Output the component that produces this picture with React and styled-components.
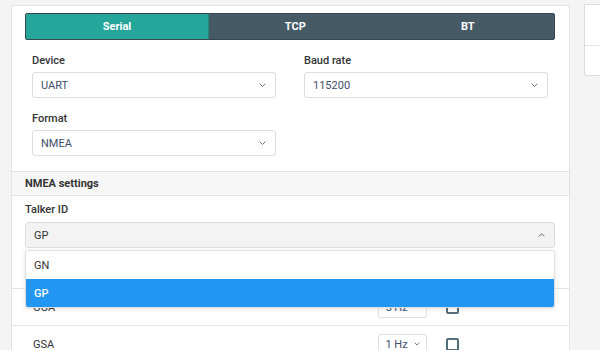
import React from "react";
import styled, { createGlobalStyle } from "styled-components";

const GlobalStyle = createGlobalStyle`
  html, body {
    margin: 0;
    padding: 0;
    background: #f4f4f4;
    font-family: Roboto, "Noto Sans", "Liberation Sans", sans-serif;
    font-size: 11px;
    color: #333;
    overflow: hidden;
  }
`;

const Page = styled.div`
  display: flex;
  align-items: flex-start;
  padding: 5px 0 0 11px;
  height: 345px;
  overflow: hidden;
`;

const Panel = styled.div`
  position: relative;
  width: 557px;
  min-height: 360px;
  background: #fff;
  border: 1px solid #e4e4e4;
  border-bottom: none;
`;

const SideCard = styled.div`
  margin-left: 14px;
  margin-top: -1px;
  flex: 1;
  background: #fff;
  border: 1px solid #dcdcdc;
  border-right: none;
  border-bottom-left-radius: 3px;
  height: 70px;
  display: flex;
  flex-direction: column;
`;

const SideCell = styled.div`
  height: ${(p) => p.h}px;
  border-bottom: ${(p) => (p.divider ? "1px solid #e4e4e4" : "none")};
`;

const Tabs = styled.div`
  display: flex;
  margin: 7px 14px 0 13px;
  height: 25px;
  border: 1px solid #37474f;
  border-radius: 2px;
  overflow: hidden;
  background: #455a64;
`;

const Tab = styled.div`
  flex: ${(p) => (p.active ? "0 0 182px" : "1")};
  display: flex;
  align-items: center;
  justify-content: center;
  color: #fff;
  font-weight: 700;
  font-size: 11px;
  background: ${(p) => (p.active ? "#26a69a" : "#455a64")};
  border-right: ${(p) => (p.active ? "1px solid #1f8c82" : "none")};
`;

const FieldGrid = styled.div`
  display: grid;
  grid-template-columns: 244px 244px;
  column-gap: 28px;
  row-gap: 14px;
  padding: 14px 7px 15px 20px;
`;

const Field = styled.div`
  display: flex;
  flex-direction: column;
`;

const Label = styled.div`
  font-weight: 500;
  color: #333;
  line-height: 14px;
  margin-bottom: ${(p) => (p.gap ? p.gap : 4)}px;
`;

const SelectBox = styled.div`
  height: 26px;
  box-sizing: border-box;
  border: 1px solid #dedede;
  border-radius: 3px;
  background: ${(p) => (p.open ? "#f3f3f3" : "#fff")};
  display: flex;
  align-items: center;
  justify-content: space-between;
  padding: 0 9px 0 8px;
  color: ${(p) => (p.open ? "#333" : "#3f4d6a")};
`;

const SectionHeader = styled.div`
  height: 23px;
  display: flex;
  align-items: center;
  padding-left: 13px;
  background: #f7f7f7;
  border-top: 1px solid #e2e2e2;
  border-bottom: 1px solid #e2e2e2;
  font-weight: 700;
  color: #333;
`;

const TalkerArea = styled.div`
  position: relative;
  padding: 7px 14px 40px 13px;
`;

const Menu = styled.div`
  position: absolute;
  left: 13px;
  right: 14px;
  top: 54px;
  z-index: 5;
  background: #fff;
  border: 1px solid #e0e0e0;
  border-radius: 3px;
  box-shadow: 0 1px 4px rgba(0, 0, 0, 0.12);
  overflow: hidden;
`;

const MenuItem = styled.div`
  height: 28px;
  display: flex;
  align-items: center;
  padding-left: 8px;
  background: ${(p) => (p.selected ? "#2196f3" : "#fff")};
  color: ${(p) => (p.selected ? "#fff" : "#333")};
  font-weight: ${(p) => (p.selected ? 500 : 400)};
`;

const Row = styled.div`
  height: 36px;
  display: flex;
  align-items: center;
  padding-left: 21px;
  border-top: 1px solid #e4e4e4;
`;

const RowName = styled.div`
  flex: 1;
  color: #333;
`;

const SmallSelect = styled.div`
  width: 49px;
  height: 21px;
  box-sizing: border-box;
  border: 1px solid #dedede;
  border-radius: 3px;
  display: flex;
  align-items: center;
  justify-content: center;
  gap: 6px;
  color: #3f4d6a;
`;

const Check = styled.div`
  width: 13px;
  height: 13px;
  box-sizing: border-box;
  border: 2px solid #546e7a;
  border-radius: 2px;
  margin: 0 110px 0 19px;
`;

const Chevron = ({ up, size = 7 }) => (
  <svg width={size} height={size * 0.6} viewBox="0 0 10 6">
    <polyline
      points={up ? "1,5 5,1 9,5" : "1,1 5,5 9,1"}
      fill="none"
      stroke="#666"
      strokeWidth="1.4"
    />
  </svg>
);

function Select({ value }) {
  return (
    <SelectBox>
      <span>{value}</span>
      <Chevron />
    </SelectBox>
  );
}

const rows = [
  { name: "GGA", rate: "5 Hz" },
  { name: "GSA", rate: "1 Hz" },
];

export default function App() {
  return (
    <>
      <GlobalStyle />
      <Page>
        <Panel>
          <Tabs>
            <Tab active>Serial</Tab>
            <Tab>TCP</Tab>
            <Tab>BT</Tab>
          </Tabs>
          <FieldGrid>
            <Field>
              <Label>Device</Label>
              <Select value="UART" />
            </Field>
            <Field>
              <Label>Baud rate</Label>
              <Select value="115200" />
            </Field>
            <Field>
              <Label>Format</Label>
              <Select value="NMEA" />
            </Field>
          </FieldGrid>
          <SectionHeader>NMEA settings</SectionHeader>
          <TalkerArea>
            <Label gap={5}>Talker ID</Label>
            <SelectBox open>
              <span>GP</span>
              <Chevron up />
            </SelectBox>
            <Menu>
              <MenuItem>GN</MenuItem>
              <MenuItem selected>GP</MenuItem>
            </Menu>
          </TalkerArea>
          {rows.map((r) => (
            <Row key={r.name}>
              <RowName>{r.name}</RowName>
              <SmallSelect>
                <span>{r.rate}</span>
                <Chevron size={6} />
              </SmallSelect>
              <Check />
            </Row>
          ))}
        </Panel>
        <SideCard>
          <SideCell h={40} divider />
          <SideCell h={29} />
        </SideCard>
      </Page>
    </>
  );
}
